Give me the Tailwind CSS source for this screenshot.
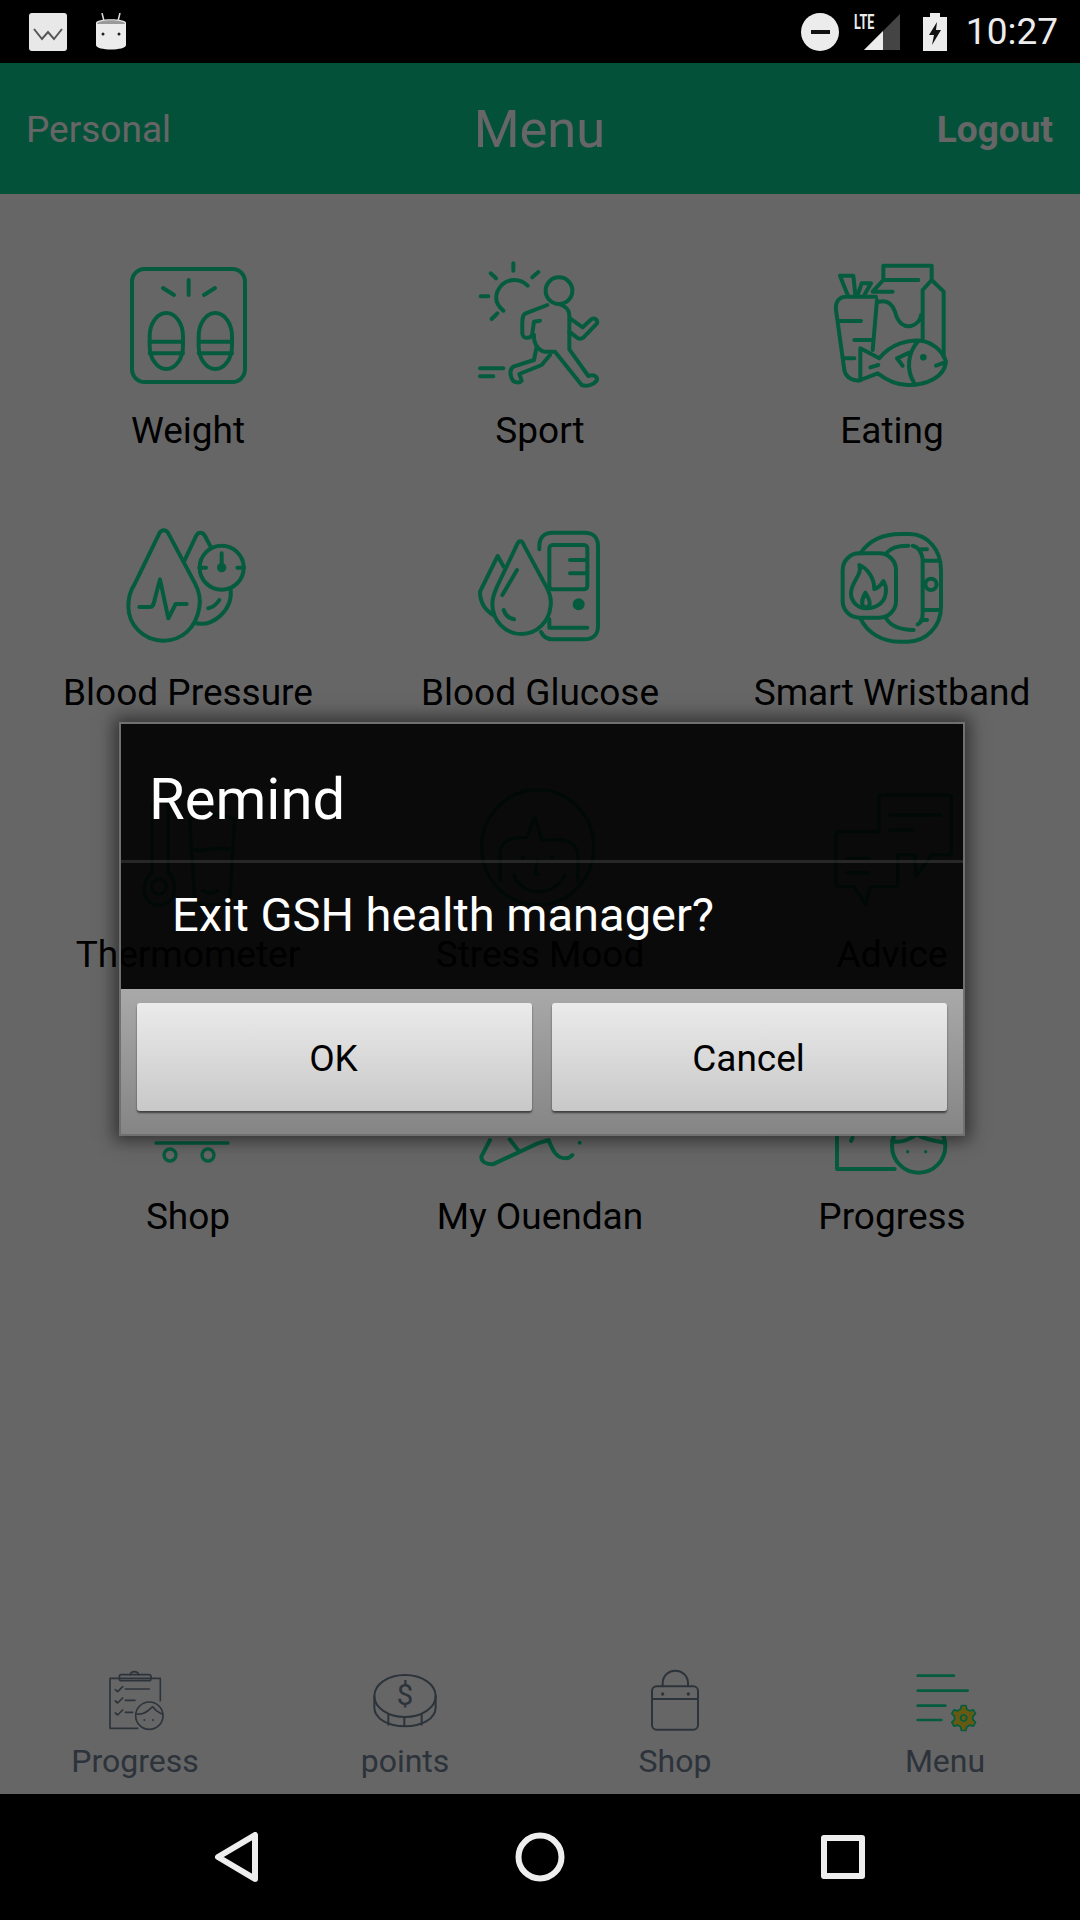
<!DOCTYPE html>
<html lang="en">
<head>
    <meta charset="UTF-8">
    <meta name="viewport" content="width=device-width, initial-scale=1.0">
    <title>GSH Menu</title>
    <script src="https://cdn.jsdelivr.net/npm/@tailwindcss/browser@4"></script>
</head>
<body class="bg-black">
<div class="w-[1080px] h-[1920px] flex flex-col bg-white overflow-hidden [font-family:Roboto,sans-serif]">

    <!-- status bar -->
    <div class="h-[63px] bg-black relative shrink-0 flex items-center justify-between pl-[29px] pr-[22px]">
        <div class="flex items-center gap-[28px]">
            <svg width="38" height="38" viewBox="0 0 38 38"><rect x="0" y="0" width="38" height="38" rx="3" fill="#e8e8e8"/><path d="M5 16l8 10 6-7 6 7 8-10" fill="none" stroke="#555" stroke-width="2"/></svg>
            <svg width="32" height="37" viewBox="0 0 32 37"><path d="M9 8 7 0M23 8l2-8" stroke="#ddd" stroke-width="1.500"/><path d="M1 10c0-5 30-5 30 0v22c0 6-30 6-30 0z" fill="#ececec"/><path d="M2 11c0-5 28-5 28 0z" fill="#9a9a9a"/><circle cx="8" cy="21" r="1.500" fill="#222"/><circle cx="24" cy="21" r="1.500" fill="#222"/></svg>
        </div>
        <div class="flex items-center">
            <svg width="38" height="38" viewBox="0 0 38 38" class="mr-[15px]"><circle cx="19" cy="19" r="19" fill="#ececec"/><rect x="10" y="17" width="19" height="4" fill="#111"/></svg>
            <div class="relative w-[46px] h-[38px] mr-[23px]">
                <svg width="46" height="38" viewBox="0 0 46 38" class="absolute left-0 top-0"><path d="M46 1v36H10z" fill="#444"/><path d="M29 18v19H10z" fill="#ececec"/></svg>
                <span class="absolute left-0 -top-[1px] text-[21px] leading-[21px] font-bold text-[#ececec] scale-x-[0.6] origin-left">LTE</span>
            </div>
            <svg width="24" height="38" viewBox="0 0 24 38" class="mr-[19px]"><path d="M7 0h10v4h7v34H0V4h7z" fill="#ececec"/><path d="M14 9 6 22h5l-2 10 9-15h-5z" fill="#111"/></svg>
            <span class="text-[37px] leading-[40px] text-[#ececec]">10:27</span>
        </div>
    </div>

    <!-- app -->
    <div class="relative flex-1 flex flex-col bg-white">
        <header class="h-[131px] shrink-0 bg-[#0cca91] grid grid-cols-3 items-center pl-[26px] pr-[27px] pt-[2px] text-white">
            <span class="text-[37px]">Personal</span>
            <span class="text-[52.500px] text-center">Menu</span>
            <span class="text-[37px] font-bold text-right">Logout</span>
        </header>

        <main class="grid grid-cols-3 px-[12px] pt-[56px] text-black text-[37px] text-center">
            <div class="h-[262px] flex flex-col items-center">
                <svg width="160" height="150" viewBox="0 0 480 450" fill="none" stroke="#0ce498" stroke-width="12" stroke-linecap="round" stroke-linejoin="round">
                    <rect x="72" y="57" width="339" height="339" rx="38"/>
                    <rect x="125" y="189" width="100" height="168" rx="50" ry="70"/><rect x="272" y="189" width="100" height="168" rx="50" ry="70"/>
                    <path d="M125 275h100M125 310h100M272 275h100M272 310h100M242 90v45M165 114l33 21M321 114l-33 21"/>
                </svg>
                <span class="mt-[9px] leading-[44px]">Weight</span>
            </div>
            <div class="h-[262px] flex flex-col items-center">
                <svg width="160" height="150" viewBox="0 0 480 450" fill="none" stroke="#0ce498" stroke-width="12" stroke-linecap="round" stroke-linejoin="round">
                    <circle cx="297" cy="122" r="40"/>
                    <path d="M203 107C175 80 130 85 112 125 103 150 115 170 130 182M160 40v22M92 70l16 15M235 66l-18 16M62 139h23M95 207l17-17"/>
                    <path d="M262 165 197 190C187 195 186 205 187 250 188 268 214 268 217 250L222 215 240 212M222 255C220 280 235 302 255 305H285L365 405C380 410 400 405 410 392 414 382 405 372 385 378L328 298V195C328 180 315 168 300 163"/>
                    <path d="M230 290 222 330 160 350C150 358 150 372 155 385 160 400 180 400 185 392L178 372 245 345 270 315M330 205 368 232 395 207C405 203 414 210 411 220L370 263C362 268 355 266 350 262L328 245M60 355h70M60 379h40"/>
                </svg>
                <span class="mt-[9px] leading-[44px]">Sport</span>
            </div>
            <div class="h-[262px] flex flex-col items-center">
                <svg width="160" height="150" viewBox="-27 0 480 450" fill="none" stroke="#0ce498" stroke-width="12" stroke-linecap="round" stroke-linejoin="round">
                    <path d="M187 90V47H332V90L305 120V270M332 90l36 35V320M187 90l-32 35h60M187 90H292M175 155c25-5 40 10 47 30 8 35 28 47 48 43 15-3 30-18 30-33M168 150l-13 150"/>
                    <path d="M75 140c-20 0-33 15-30 40l25 180c5 25 30 35 50 30M50 213h70M100 270h50M70 325h30M80 135 57 77h40l6 58M110 135l12-35h28l-20 35M75 140h90"/>
                    <path d="M118 295l57 30c35-45 90-57 125-53 35 5 65 30 75 63-5 45-55 70-115 70-40 0-70-20-90-35l-52 20zM290 275c-30 35-35 85-10 125M265 308l-37 17 17 22M345 347l27-10M148 352l24-7"/>
                    <circle cx="307" cy="322" r="10" fill="#0ce498" stroke="none"/>
                </svg>
                <span class="mt-[9px] leading-[44px]">Eating</span>
            </div>

            <div class="h-[262px] flex flex-col items-center">
                <svg width="160" height="150" viewBox="-6 -24 480 450" fill="none" stroke="#0ce498" stroke-width="12" stroke-linecap="round" stroke-linejoin="round">
                    <path d="M148 40c7-12 20-12 27 0l80 150c13 25 17 50 13 72-10 63-53 100-108 100-60 0-105-47-105-104 0-23 7-48 20-68z"/>
                    <path d="M222 125l36-77c7-13 20-13 27 0l18 34M362 210c6 60-52 110-104 100M295 265c15-3 25-13 33-25"/>
                    <circle cx="335" cy="143" r="66"/>
                    <path d="M335 100v43M268 143h20M382 143h20M88 261h32c10 0 12-11 15-26l15-57 25 117 22-43h33"/>
                    <circle cx="335" cy="143" r="14" fill="#0ce498" stroke="none"/>
                </svg>
                <span class="mt-[9px] leading-[44px] whitespace-nowrap">Blood Pressure</span>
            </div>
            <div class="h-[262px] flex flex-col items-center">
                <svg width="160" height="150" viewBox="0 0 480 450" fill="none" stroke="#0ce498" stroke-width="12" stroke-linecap="round" stroke-linejoin="round">
                    <path d="M238 112V102c0-25 15-40 40-40h96c25 0 40 15 40 40v240c0 25-15 40-40 40h-96c-15 0-28-8-35-22"/>
                    <rect x="268" y="99" width="114" height="133" rx="10"/>
                    <path d="M382 144h-52M382 184h-52M268 322v25h114"/>
                    <circle cx="356" cy="277" r="18" fill="#0ce498" stroke="none"/>
                    <path d="M170 100c6-16 16-16 22 0l70 130c10 20 12 35 10 50-4 50-42 86-87 86-50 0-88-41-88-91 0-20 7-35 15-53z"/>
                    <path d="M171 174l-44 75M131 294c5 15 15 25 31 28M113 132l-53 107c0 30 15 55 40 70M113 132l18 32"/>
                </svg>
                <span class="mt-[9px] leading-[44px] whitespace-nowrap">Blood Glucose</span>
            </div>
            <div class="h-[262px] flex flex-col items-center">
                <svg width="160" height="150" viewBox="-27 -24 480 450" fill="none" stroke="#0ce498" stroke-width="12" stroke-linecap="round" stroke-linejoin="round">
                    <path d="M118 100c27-40 72-58 122-58h25c55 0 95 48 95 108v110c0 60-45 105-100 105h-25c-50 0-95-25-117-70M195 100c15-15 30-23 67-23M195 295c15 25 40 35 83 35M275 77c15 3 25 13 30 38v165c0 20-7 30-15 33M300 88h18M305 122h50M305 270h50M300 300h18"/>
                    <circle cx="330" cy="193" r="17"/>
                    <rect x="65" y="100" width="160" height="193" rx="50"/>
                    <path d="M115 135c10 30-25 50-25 85 0 25 20 45 45 45 35 0 60-20 60-55 0-15-5-20-8-27-7 12-17 22-27 24 0-32-20-62-45-72zM133 218c-8 17-13 27-8 37 5 10 15 10 20 0 5-10-5-25-12-37z"/>
                </svg>
                <span class="mt-[9px] leading-[44px] whitespace-nowrap">Smart Wristband</span>
            </div>

            <div class="h-[262px] flex flex-col items-center">
                <svg width="160" height="150" viewBox="0 0 480 450" fill="none" stroke="#0ce498" stroke-width="10" stroke-linecap="round" stroke-linejoin="round">
                    <path d="M132 100c0-30 49-30 49 0v195c30 30 25 98-28 98-53 0-58-68-21-98z"/><circle cx="153" cy="338" r="22"/>
                    <path d="M245 138c30-20 110-20 135 0l-15 240c-20 20-85 20-105 0zM258 225c30 15 50-10 105 0M285 350c15 10 30 10 45 0"/>
                </svg>
                <span class="mt-[9px] leading-[44px]">Thermometer</span>
            </div>
            <div class="h-[262px] flex flex-col items-center">
                <svg width="160" height="150" viewBox="0 0 480 450" fill="none" stroke="#0ce498" stroke-width="10" stroke-linecap="round" stroke-linejoin="round">
                    <ellipse cx="233" cy="220" rx="168" ry="173"/>
                    <path d="M121 320V240c0-40 29-50 79-50l25-62 20 72c65-10 109 0 109 50v70M233 260l-8 40h10M161 303c29 67 119 67 154 0"/>
                    <circle cx="188" cy="250" r="7" fill="#0ce498" stroke="none"/><circle cx="278" cy="250" r="7" fill="#0ce498" stroke="none"/>
                </svg>
                <span class="mt-[9px] leading-[44px]">Stress Mood</span>
            </div>
            <div class="h-[262px] flex flex-col items-center">
                <svg width="160" height="150" viewBox="0 0 480 450" fill="none" stroke="#0ce498" stroke-width="10" stroke-linecap="round" stroke-linejoin="round">
                    <path d="M201 173V73q0-10 10-10h197q10 0 10 10v160q0 10-10 10h-50l-45 65-5-65h-50M233 123h153M233 168h72"/>
                    <path d="M201 173H82q-10 0-10 10v145q0 10 10 10h45l34 55 14-55h72q10 0 10-10v-85M104 253h65M104 296h65"/>
                </svg>
                <span class="mt-[9px] leading-[44px]">Advice</span>
            </div>

            <div class="h-[262px] flex flex-col items-center">
                <svg width="160" height="150" viewBox="0 0 480 450" fill="none" stroke="#0ce498" stroke-width="10" stroke-linecap="round" stroke-linejoin="round">
                    <path d="M90 90h50l30 200h200M144 321h216"/>
                    <circle cx="186" cy="357" r="18"/><circle cx="300" cy="357" r="18"/>
                </svg>
                <span class="mt-[9px] leading-[44px]">Shop</span>
            </div>
            <div class="h-[262px] flex flex-col items-center">
                <svg width="160" height="150" viewBox="0 0 480 450" fill="none" stroke="#0ce498" stroke-width="12" stroke-linecap="round" stroke-linejoin="round">
                    <path d="M90 312l-26 50c0 15 15 23 34 23l135-63 33-10c10 25 20 55 51 55 10 0 16-5 20-10M149 310l25 32"/>
                    <circle cx="359" cy="320" r="6" fill="#0ce498" stroke="none"/>
                </svg>
                <span class="mt-[9px] leading-[44px]">My Ouendan</span>
            </div>
            <div class="h-[262px] flex flex-col items-center">
                <svg width="160" height="150" viewBox="0 0 480 450" fill="none" stroke="#0ce498" stroke-width="12" stroke-linecap="round" stroke-linejoin="round">
                    <path d="M75 302v97h173M122 305l-5 10"/>
                    <circle cx="320" cy="330" r="80"/>
                    <path d="M240 315c30 10 60-10 75-20 20 15 50 20 85 25"/>
                    <circle cx="287" cy="347" r="5" fill="#0ce498" stroke="none"/><circle cx="341" cy="347" r="5" fill="#0ce498" stroke="none"/>
                </svg>
                <span class="mt-[9px] leading-[44px]">Progress</span>
            </div>
        </main>

        <!-- tab bar -->
        <nav class="mt-auto grid grid-cols-4 pb-[14px] text-[32px] leading-[38px] text-[#708094] text-center">
            <div class="flex flex-col items-center">
                <svg width="100" height="78" viewBox="0 0 300 234" fill="none" stroke="#708094" stroke-width="5" stroke-linecap="round" stroke-linejoin="round">
                    <path d="M158 193H75V43H226V110"/>
                    <rect x="103" y="32" width="95" height="18" rx="6"/>
                    <path d="M136 32c2-12 22-12 25 0M91 77l7 6 15-15M91 111l7 6 15-15M91 147l7 6 15-15M121 75h72M121 109h29M121 145h22"/>
                    <circle cx="193" cy="155" r="41"/>
                    <path d="M156 150c27 5 40-18 47-22 10 15 20 18 28 22"/>
                    <circle cx="178" cy="168" r="3" fill="#708094" stroke="none"/><circle cx="204" cy="168" r="3" fill="#708094" stroke="none"/>
                </svg>
                <span>Progress</span>
            </div>
            <div class="flex flex-col items-center">
                <svg width="100" height="78" viewBox="0 0 300 234" fill="none" stroke="#708094" stroke-width="6" stroke-linecap="round" stroke-linejoin="round">
                    <ellipse cx="150" cy="96" rx="92" ry="63"/>
                    <path d="M58 96v34c0 35 42 57 92 57s92-22 92-57V96M100 152v30M148 160v27M200 152v30"/>
                    <text x="150" y="124" text-anchor="middle" font-family="Roboto, sans-serif" font-size="88" fill="#708094" stroke="none">$</text>
                </svg>
                <span>points</span>
            </div>
            <div class="flex flex-col items-center">
                <svg width="100" height="78" viewBox="0 0 300 234" fill="none" stroke="#708094" stroke-width="6" stroke-linecap="round" stroke-linejoin="round">
                    <rect x="81" y="67" width="138" height="130" rx="14"/>
                    <path d="M113 67V58c0-50 76-50 76 0v9M81 105h138"/>
                    <circle cx="113" cy="90" r="5" fill="#708094" stroke="none"/><circle cx="190" cy="90" r="5" fill="#708094" stroke="none"/>
                </svg>
                <span>Shop</span>
            </div>
            <div class="flex flex-col items-center">
                <svg width="100" height="78" viewBox="0 0 300 234" fill="none" stroke="#0ce498" stroke-width="8" stroke-linecap="round" stroke-linejoin="round">
                    <path d="M68 35h109M68 80h150M68 125h83M68 168h71"/>
                    <g transform="translate(206 162) rotate(30)">
                        <path fill="#ffe030" stroke-width="5" d="M26.3-9.6 37.4-6.6V6.6L26.3 9.6 21.4 18 24.4 29.1 13 35.7 4.900 27.6H-4.900L-13 35.700-24.400 29.100-21.400 18-26.300 9.600-37.400 6.600V-6.600L-26.300-9.600-21.400-18-24.400-29.100-13-35.700-4.900-27.600H4.900L13-35.700 24.400-29.100 21.400-18z"/>
                        <circle r="9" stroke-width="5"/>
                    </g>
                </svg>
                <span>Menu</span>
            </div>
        </nav>

        <!-- dim + dialog -->
        <div class="absolute inset-0 bg-black/60 flex items-center justify-center">
            <div class="w-[846px] ml-[4px] border-2 border-[#707070] shadow-[0_0_16px_5px_rgba(0,0,0,0.5)]">
                <div class="bg-black/90 text-white">
                    <div class="h-[136px] flex items-center pl-[28px] pt-[14px] text-[58px] leading-[60px]">Remind</div>
                    <div class="h-[3px] bg-white/12"></div>
                    <div class="h-[126px] flex items-center pl-[51px] pb-[22px] text-[47px] leading-[54px]">Exit GSH health manager?</div>
                </div>
                <div class="bg-linear-to-b from-[#a9a9a9] to-[#858585] pt-[14px] pb-[23px] px-[16px] grid grid-cols-2 gap-[20px] text-black text-[37px]">
                    <button class="h-[108px] pt-[4px] pr-[2px] rounded-[3px] bg-linear-to-b from-[#ebebeb] to-[#c8c8c8] shadow-[0_2px_2px_rgba(0,0,0,0.55)]">OK</button>
                    <button class="h-[108px] pt-[4px] pr-[2px] rounded-[3px] bg-linear-to-b from-[#ebebeb] to-[#c8c8c8] shadow-[0_2px_2px_rgba(0,0,0,0.55)]">Cancel</button>
                </div>
            </div>
        </div>
    </div>

    <!-- nav bar -->
    <div class="h-[126px] bg-black shrink-0 relative flex items-center justify-center">
        <div class="w-[650px] flex items-center justify-between">
            <svg width="44" height="50" viewBox="0 0 44 50" fill="none" stroke="#eeeeee" stroke-width="6" stroke-linejoin="round"><path d="M40 3V47L3 25z"/></svg>
            <svg width="50" height="50" viewBox="0 0 50 50" fill="none" stroke="#eeeeee" stroke-width="6"><circle cx="25" cy="25" r="21.500"/></svg>
            <svg width="44" height="44" viewBox="0 0 44 44" fill="none" stroke="#eeeeee" stroke-width="6" stroke-linejoin="round"><rect x="3" y="3" width="38" height="38"/></svg>
        </div>
    </div>
</div>
</body>
</html>
